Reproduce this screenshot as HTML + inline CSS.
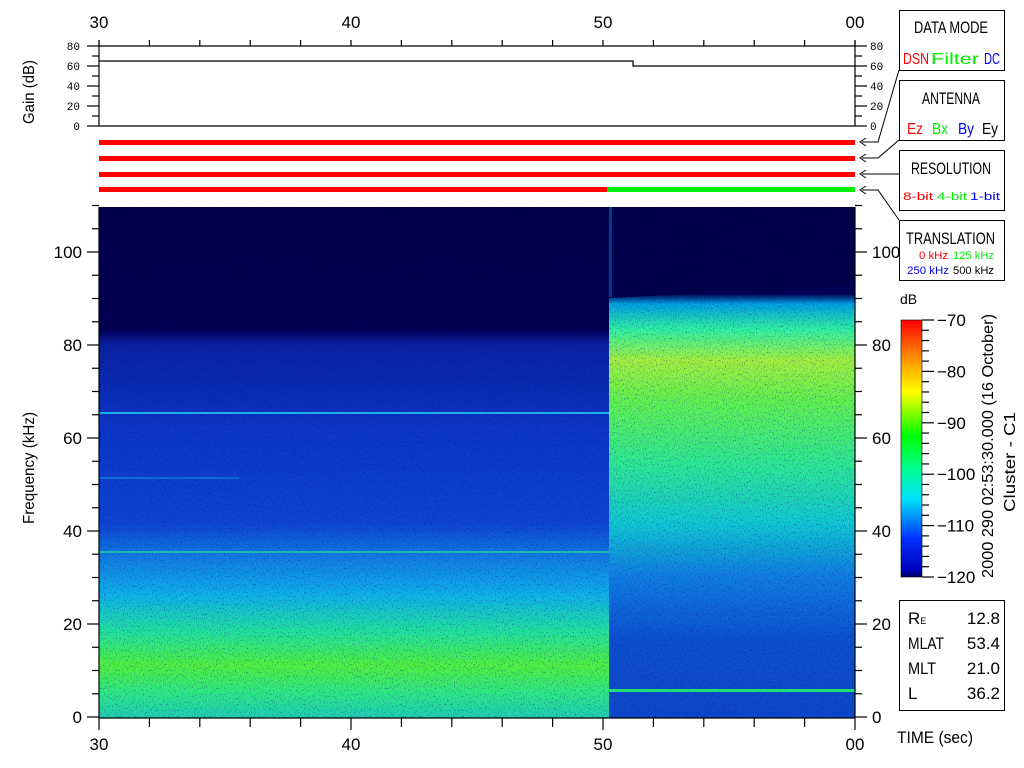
<!DOCTYPE html>
<html><head><meta charset="utf-8"><style>
html,body{margin:0;padding:0;background:#fff;width:1024px;height:768px;overflow:hidden}
svg{display:block}
text{font-family:"Liberation Sans",sans-serif}
.m{font-family:"Liberation Mono",monospace}
</style></head><body>
<svg id="s" width="1024" height="768" viewBox="0 0 1024 768" xmlns="http://www.w3.org/2000/svg">
<defs>
<linearGradient id="gl" x1="0" y1="207" x2="0" y2="717" gradientUnits="userSpaceOnUse">
<stop offset="0" stop-color="#000048"/>
<stop offset="0.24" stop-color="#000050"/>
<stop offset="0.27" stop-color="#0a20a0"/>
<stop offset="0.45" stop-color="#0c38c8"/>
<stop offset="0.62" stop-color="#0e44d0"/>
<stop offset="0.68" stop-color="#1078e0"/>
<stop offset="0.76" stop-color="#10b0e8"/>
<stop offset="0.83" stop-color="#20e0a0"/>
<stop offset="0.90" stop-color="#50f040"/>
<stop offset="0.95" stop-color="#30e880"/>
<stop offset="1" stop-color="#20d0b0"/>
</linearGradient>
<linearGradient id="gr" x1="0" y1="207" x2="0" y2="717" gradientUnits="userSpaceOnUse">
<stop offset="0" stop-color="#000048"/>
<stop offset="0.17" stop-color="#000050"/>
<stop offset="0.19" stop-color="#00a0e0"/>
<stop offset="0.24" stop-color="#30f0a0"/>
<stop offset="0.30" stop-color="#a0f040"/>
<stop offset="0.38" stop-color="#60f050"/>
<stop offset="0.50" stop-color="#30e890"/>
<stop offset="0.62" stop-color="#10c8d0"/>
<stop offset="0.72" stop-color="#1080e0"/>
<stop offset="0.85" stop-color="#0c50d0"/>
<stop offset="1" stop-color="#0c48c8"/>
</linearGradient>
<filter id="nz" x="0" y="0" width="1" height="1">
<feTurbulence type="fractalNoise" baseFrequency="0.9 0.5" numOctaves="1" seed="3"/>
<feColorMatrix values="0 0 0 0 0  0 0 0 0 0  0 0 0 0 0.3  0 0 0 1.4 -0.75"/>
</filter>
</defs>
<rect x="99" y="207" width="510" height="511" fill="url(#gl)"/>
<rect x="609" y="207" width="246" height="511" fill="url(#gr)"/>
<polygon points="609,207 855,207 855,283 740,292 609,298" fill="#000048"/>
<rect x="99" y="207" width="756" height="511" filter="url(#nz)"/>
<rect x="99" y="412" width="510" height="2" fill="#20b0f0"/>
<rect x="99" y="477" width="140" height="2" fill="#1080e0" opacity=".7"/>
<rect x="99" y="551" width="510" height="2" fill="#20d0a0" opacity=".8"/>
<rect x="609" y="689" width="246" height="3" fill="#20e070"/>
<rect x="609" y="207" width="3" height="90" fill="#0060c0" opacity=".6"/>
<g stroke="#000" stroke-width="1.2" fill="none">
<line x1="99" y1="46" x2="855" y2="46"/>
<line x1="99" y1="126" x2="855" y2="126"/>
<line x1="99" y1="40" x2="99" y2="126"/>
<line x1="855" y1="40" x2="855" y2="126"/>
<polyline points="99,61 633,61 633,66 855,66"/>
<line x1="99" y1="718" x2="855" y2="718"/>
<line x1="99" y1="207" x2="99" y2="718"/>
<line x1="855" y1="207" x2="855" y2="718"/>
</g>
<g id="ticks" stroke="#000" stroke-width="1.2"></g>
<rect x="99" y="140" width="756" height="5" fill="#f00"/>
<rect x="99" y="156" width="756" height="5" fill="#f00"/>
<rect x="99" y="172" width="756" height="5" fill="#f00"/>
<rect x="99" y="187" width="508" height="5" fill="#f00"/>
<rect x="607" y="187" width="248" height="5" fill="#0e0"/>
<g stroke="#000" fill="none" stroke-width="1">
<polyline points="899,70 878,142 862,142"/>
<polyline points="899,140 878,158 862,158"/>
<polyline points="899,174 862,174"/>
<polyline points="899,220 878,190 862,190"/>
<polyline points="866,138 860,142 866,146"/>
<polyline points="866,154 860,158 866,162"/>
<polyline points="866,170 860,174 866,178"/>
<polyline points="866,186 860,190 866,194"/>
</g>
<g fill="none" stroke="#000" stroke-width="1">
<rect x="899.5" y="10.5" width="105" height="60"/>
<rect x="899.5" y="80.5" width="105" height="60"/>
<rect x="899.5" y="150.5" width="105" height="60"/>
<rect x="899.5" y="220.5" width="105" height="60"/>
<rect x="899.5" y="600.5" width="105" height="110"/>
</g>
<g font-size="17">
<text x="914" y="33" textLength="74" lengthAdjust="spacingAndGlyphs">DATA MODE</text>
<text x="922" y="104" textLength="58" lengthAdjust="spacingAndGlyphs">ANTENNA</text>
<text x="911" y="174" textLength="80" lengthAdjust="spacingAndGlyphs">RESOLUTION</text>
<text x="906" y="244" textLength="89" lengthAdjust="spacingAndGlyphs">TRANSLATION</text>
</g>
<g font-size="16">
<text x="903" y="64" fill="#f00" textLength="26" lengthAdjust="spacingAndGlyphs">DSN</text>
<text x="931" y="64" fill="#0e0" textLength="48" lengthAdjust="spacingAndGlyphs">Filter</text>
<text x="984" y="64" fill="#00f" textLength="16" lengthAdjust="spacingAndGlyphs">DC</text>
<text x="907" y="134" fill="#f00" textLength="16" lengthAdjust="spacingAndGlyphs">Ez</text>
<text x="932" y="134" fill="#0e0" textLength="16" lengthAdjust="spacingAndGlyphs">Bx</text>
<text x="958" y="134" fill="#00f" textLength="16" lengthAdjust="spacingAndGlyphs">By</text>
<text x="982" y="134" textLength="16" lengthAdjust="spacingAndGlyphs">Ey</text>
</g>
<g class="m" font-size="11">
<text x="903" y="200" fill="#f00" textLength="30" lengthAdjust="spacingAndGlyphs">8-bit</text>
<text x="937" y="200" fill="#0e0" textLength="30" lengthAdjust="spacingAndGlyphs">4-bit</text>
<text x="970" y="200" fill="#00f" textLength="30" lengthAdjust="spacingAndGlyphs">1-bit</text>
<text x="919" y="259" fill="#f00" textLength="29" lengthAdjust="spacingAndGlyphs">0 kHz</text>
<text x="953" y="259" fill="#0e0" textLength="41" lengthAdjust="spacingAndGlyphs">125 kHz</text>
<text x="907" y="274" fill="#00f" textLength="42" lengthAdjust="spacingAndGlyphs">250 kHz</text>
<text x="953" y="274" textLength="41" lengthAdjust="spacingAndGlyphs">500 kHz</text>
</g>
<defs><linearGradient id="cb" x1="0" y1="1" x2="0" y2="0">
<stop offset="0" stop-color="#000060"/><stop offset="0.03" stop-color="#0000c0"/><stop offset="0.15" stop-color="#0030ff"/>
<stop offset="0.3" stop-color="#00e0ff"/><stop offset="0.42" stop-color="#00ff90"/><stop offset="0.55" stop-color="#00ff00"/>
<stop offset="0.72" stop-color="#ffff00"/><stop offset="0.85" stop-color="#ff9000"/><stop offset="1" stop-color="#ff0000"/>
</linearGradient></defs>
<rect x="901" y="320" width="21" height="257" fill="url(#cb)" stroke="#000" stroke-width=".6"/>
<text x="900" y="304" font-size="14">dB</text>
<g font-size="17" id="cbl"></g>
<text transform="translate(993,578) rotate(-90)" font-size="16" textLength="264" lengthAdjust="spacingAndGlyphs">2000 290 02:53:30.000 (16 October)</text>
<text transform="translate(1015,512) rotate(-90)" font-size="16" textLength="100" lengthAdjust="spacingAndGlyphs">Cluster - C1</text>
<g font-size="17">
<text x="908" y="624">R<tspan font-size="9">E</tspan></text><text x="1000" y="624" text-anchor="end">12.8</text>
<text x="908" y="649" textLength="36" lengthAdjust="spacingAndGlyphs">MLAT</text><text x="1000" y="649" text-anchor="end">53.4</text>
<text x="908" y="674" textLength="28" lengthAdjust="spacingAndGlyphs">MLT</text><text x="1000" y="674" text-anchor="end">21.0</text>
<text x="908" y="699">L</text><text x="1000" y="699" text-anchor="end">36.2</text>
<text x="897" y="743" textLength="76" lengthAdjust="spacingAndGlyphs">TIME (sec)</text>
</g>
<text transform="translate(34,124) rotate(-90)" font-size="16" textLength="64" lengthAdjust="spacingAndGlyphs">Gain (dB)</text>
<text transform="translate(34,524) rotate(-90)" font-size="16" textLength="112" lengthAdjust="spacingAndGlyphs">Frequency (kHz)</text>
<g id="lbl" font-size="17" text-anchor="middle"></g>
</svg>
<script>
var NS="http://www.w3.org/2000/svg",t=document.getElementById("ticks"),L=document.getElementById("lbl");
function ln(a,b,c,d){var e=document.createElementNS(NS,"line");e.setAttribute("x1",a);e.setAttribute("y1",b);e.setAttribute("x2",c);e.setAttribute("y2",d);t.appendChild(e);}
function tx(p,x,y,s,o){var e=document.createElementNS(NS,"text");e.setAttribute("x",x);e.setAttribute("y",y);e.textContent=s;for(var k in o)e.setAttribute(k,o[k]);p.appendChild(e);}
var labs=["30","40","50","00"];
for(var s=0;s<=30;s+=2){var x=99+s*25.2;var maj=s%10==0;
 ln(x,40,x,46);ln(x,718,x,maj?730:727);
 if(maj){tx(L,x,28,labs[s/10]);tx(L,x,750,labs[s/10]);}}
for(var f=0;f<=110;f+=5){var y=717-f*4.65;var maj=f%20==0;
 ln(maj?87:92,y,99,y);ln(855,y,maj?867:862,y);
 if(maj){tx(L,82,y+6,String(f),{"text-anchor":"end"});tx(L,872,y+6,String(f),{"text-anchor":"start"});}}
for(var g=0;g<=80;g+=10){var y=126-g;var maj=g%20==0;ln(maj?87:92,y,99,y);ln(855,y,maj?867:862,y);
 if(maj){tx(L,80,y+4,String(g),{"text-anchor":"end","font-size":"11","class":"m"});tx(L,870,y+4,String(g),{"text-anchor":"start","font-size":"11","class":"m"});}}
var C=document.getElementById("cbl");
for(var d=0;d<=50;d+=2){var y=320+d*5.14;var maj=d%10==0;ln(922,y,maj?934:929,y);
 if(maj)tx(C,937,y+6,String(-70-d).replace("-","\u2212"));}
</script>
</body></html>
